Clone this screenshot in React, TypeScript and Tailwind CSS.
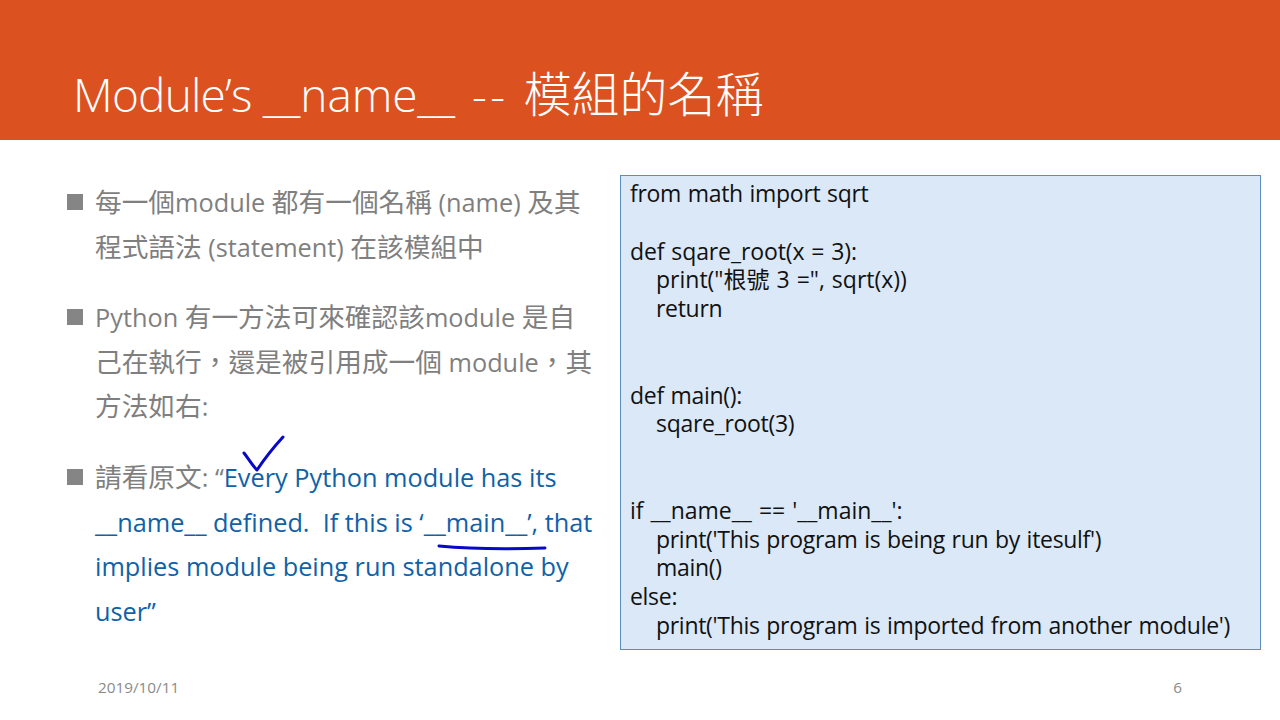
const cjk = '"Open Sans","Noto Sans CJK TC",sans-serif';

function Bullet({ children }: { children: React.ReactNode }) {
  return (
    <div className="flex">
      <div className="w-[28px] shrink-0 pt-[14px]">
        <div className="h-[16px] w-[16px] bg-[#858585]" />
      </div>
      <div className="flex flex-col text-[26.7px] leading-[44.6px] text-[#7f7f7f]">{children}</div>
    </div>
  );
}

function L({ children }: { children: React.ReactNode }) {
  return <span className="text-[25.3px]">{children}</span>;
}

const code: [string, string][] = [
  ["from math import sqrt", ""],
  ["", ""],
  ["def sqare_root(x = 3):", "tracking-[-0.1px]"],
  ['print("根號 3 =", sqrt(x))', "pl-[26px] tracking-[0px]"],
  ["return", "pl-[26px]"],
  ["", ""],
  ["", ""],
  ["def main():", ""],
  ["sqare_root(3)", "pl-[26px]"],
  ["", ""],
  ["", ""],
  ["if __name__ == '__main__':", "tracking-[0px]"],
  ["print('This program is being run by itesulf')", "pl-[26px]"],
  ["main()", "pl-[26px]"],
  ["else:", ""],
  ["print('This program is imported from another module')", "pl-[26px]"],
];

export default function App() {
  return (
    <div lang="zh-TW" className="relative flex h-[720px] w-[1280px] flex-col overflow-hidden bg-white" style={{ fontFamily: cjk }}>
      <header className="flex h-[140px] shrink-0 items-end bg-[#db5220] pb-[14px] pl-[73px]">
        <h1 className="whitespace-pre text-[48px] font-light leading-[64px] text-white">
          <span className="text-[46px] tracking-[-0.8px]">Module’s </span>
          <span className="text-[46px] tracking-[-0.1px]">__name__</span>
          <span className="ml-[17px] mr-[15px] text-[46px] tracking-[3.5px]">--</span>模組的名稱
        </h1>
      </header>
      <main className="flex flex-1 pl-[67px] pt-[35px]">
        <div className="flex w-[553px] shrink-0 flex-col gap-[26px] pt-[5px]">
          <Bullet>
            <span className="whitespace-pre">每一個<L>module </L>都有一個名稱<L> (name) </L>及其</span>
            <span className="whitespace-pre">程式語法<L> (statement) </L>在該模組中</span>
          </Bullet>
          <Bullet>
            <span className="whitespace-pre"><L>Python </L>有一方法可來確認該<L>module </L>是自</span>
            <span className="whitespace-pre">己在執行，還是被引用成一個<L> module</L>，其</span>
            <span>方法如右<L>:</L></span>
          </Bullet>
          <Bullet>
            <span className="whitespace-pre">請看原文<L>: “</L><span className="text-[#0f62a8]"><L>Every Python module has its</L></span></span>
            <span className="whitespace-pre text-[#0f62a8]"><L>__name__ defined.  If this is ‘__main__’, that</L></span>
            <span className="text-[#0f62a8]"><L>implies module being run standalone by</L></span>
            <span className="text-[#0f62a8]"><L>user”</L></span>
          </Bullet>
        </div>
        <div className="h-[475px] w-[641px] border border-[#5b8dc4] bg-[#dae8f7] pl-[9px] pt-[3px] text-[23px] leading-[28.8px] tracking-[-0.3px] text-[#111] [word-spacing:1px]">
          {code.map(([l, cls], i) => (
            <div key={i} className={`h-[28.8px] ${cls}`}>{l}</div>
          ))}
        </div>
      </main>
      <footer className="flex h-[70px] shrink-0 justify-between pl-[98px] pr-[98px] pt-[26px] text-[15.3px] text-[#8a8a8a]">
        <span>2019/10/11</span>
        <span>6</span>
      </footer>
      <svg className="absolute left-0 top-0" width="1280" height="720" fill="none" stroke="#0808c8" strokeWidth="3" strokeLinecap="round" strokeLinejoin="round">
        <path d="M244 453 C248 458 252 465 257 470 C263 461 272 449 283 437" />
        <path d="M439 546 C460 548 490 550 545 548" />
      </svg>
    </div>
  );
}
